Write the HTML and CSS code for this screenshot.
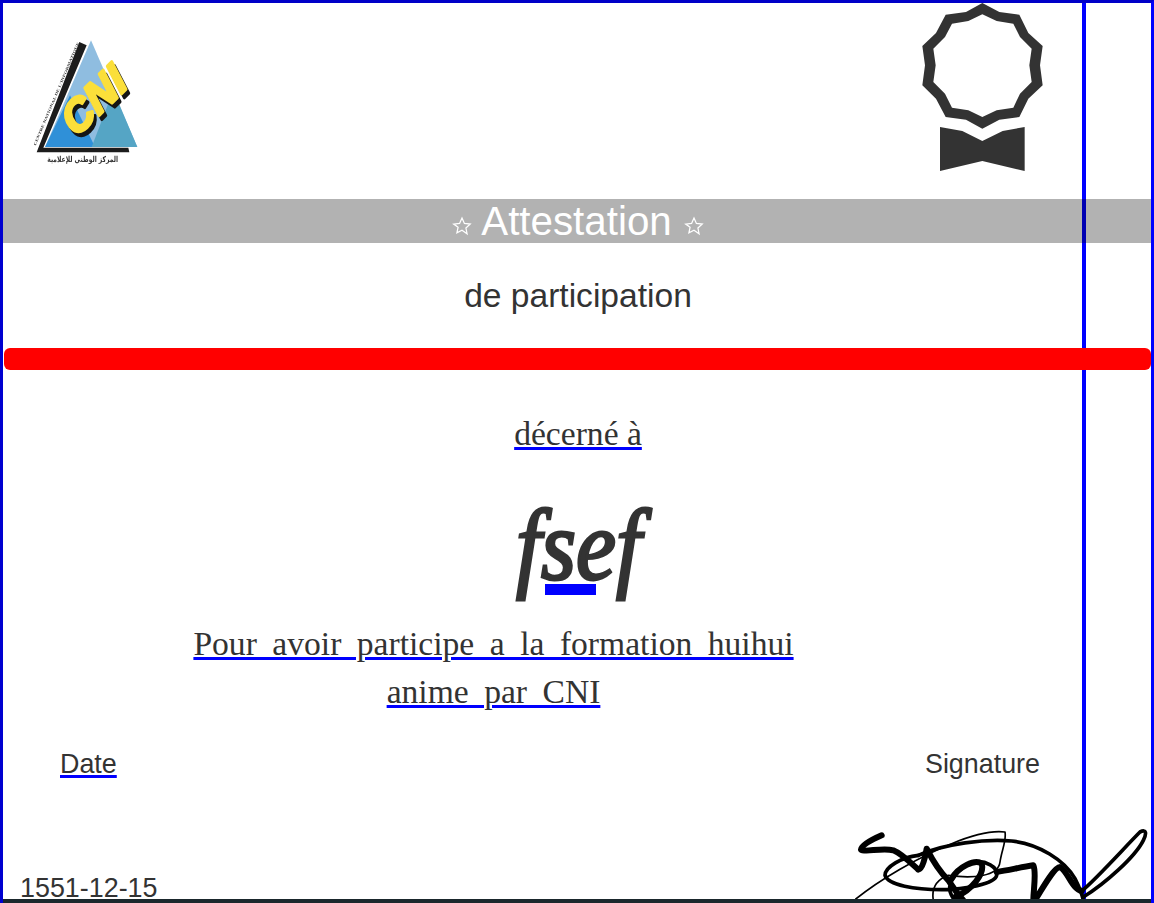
FILE: index.html
```html
<!DOCTYPE html>
<html lang="fr">
<head>
<meta charset="utf-8">
<title>Attestation</title>
<link rel="stylesheet" href="styles.css">
</head>
<body>
<main class="page">
  <div class="rule"></div>
  <header class="top">
    <svg class="logo" viewBox="90 110 330 390" width="110" height="130" role="img" aria-label="CNI">
      <polygon class="lg-black" points="238,125 260,135 130,442 385,442 388,456 110,456"/>
      <polygon class="lg-a" points="273,120 412,440 135,440"/>
      <polygon class="lg-b" points="135,440 210,285 285,440"/>
      <polygon class="lg-c" points="275,440 340,270 412,440"/>
      <text class="lg-small" transform="translate(107,436) rotate(-67)" textLength="335" lengthAdjust="spacingAndGlyphs">CENTRE NATIONAL DE L'INFORMATIQUE</text>
      <text class="lg-shadow" transform="translate(236,424) rotate(-44) skewX(-6)">CNI</text>
      <text class="lg-cni" transform="translate(228,412) rotate(-44) skewX(-6)">CNI</text>
      <text class="lg-ar" transform="translate(248,486) scale(1,1.35)" dir="rtl">المركز الوطني للإعلامية</text>
    </svg>
    <svg class="medal" viewBox="120 8 375 510" width="125" height="170" aria-hidden="true">
      <path fill-rule="evenodd" d="M307,8 258,35 197,43 168,98 127,137 135,195 127,255 168,295 197,350 258,358 307,385 358,358 418,350 445,295 488,255 480,195 488,137 445,98 418,43 358,35Z M307,42 265,62 216,70 195,110 160,145 167,195 160,245 195,280 216,322 265,330 307,350 350,330 400,322 420,280 455,245 448,195 455,145 420,110 400,70 350,62Z"/>
      <path d="M180,380 247,392 307,422 368,392 434,380 434,512 307,482 180,512Z"/>
    </svg>
  </header>

  <h1 class="band">
    <svg class="star" viewBox="0 0 24 24" aria-hidden="true"><path d="M12 2.500l2.900 6.400 7 .8-5.200 4.700 1.400 6.900L12 17l-6.100 3.300 1.400-6.900L2.100 9.700l7-.8z"/></svg>
    <span>Attestation</span>
    <svg class="star star-end" viewBox="0 0 24 24" aria-hidden="true"><path d="M12 2.500l2.900 6.400 7 .8-5.200 4.700 1.400 6.900L12 17l-6.100 3.300 1.400-6.900L2.100 9.700l7-.8z"/></svg>
  </h1>

  <h2 class="sub">de participation</h2>
  <div class="redbar"></div>
  <p class="awarded"><u>décerné à</u></p>
  <p class="name"><span class="name-text">fsef</span></p>
  <p class="reason"><u>Pour avoir participe a la formation huihui<br>anime par CNI</u></p>

  <footer class="bottom">
    <div class="col-date">
      <div class="date-label"><u>Date</u></div>
      <div class="date-value">1551-12-15</div>
    </div>
    <div class="col-sign">
      <div class="sign-label">Signature</div>
      <svg class="sign" viewBox="50 80 888 216" width="296" height="72" aria-hidden="true">
        <path class="s-thick" d="M130,105 C100,118 70,135 68,148 C80,158 130,140 165,150 C190,160 220,190 240,208 C255,205 262,160 265,145 C275,165 300,210 330,240 C345,262 360,285 375,300"/>
        <path class="s-mid" d="M240,165 C190,170 140,200 140,225 C150,255 230,268 310,268 C380,268 470,250 475,225 C480,200 440,180 410,185 C370,195 340,230 335,255 C330,275 345,295 350,300"/>
        <path class="s-thick" d="M350,290 C400,270 440,220 430,190 C410,175 360,200 340,235"/>
        <path class="s-mid" d="M240,165 C320,130 440,115 520,122 C600,130 680,180 710,235 C720,255 730,275 735,300"/>
        <path class="s-thin" d="M50,298 C120,240 240,170 340,130 C400,105 460,90 500,95 C505,120 490,150 485,185 C480,230 400,235 330,225 C290,240 280,270 285,300"/>
        <path class="s-thick" d="M475,215 C510,210 550,200 585,195 C595,215 585,270 585,300 M590,300 C620,250 650,200 665,200 C690,215 700,265 730,272"/>
        <path class="s-mid" d="M730,272 C770,240 860,140 905,95 C925,85 925,100 915,120 C890,170 800,250 735,290"/>
      </svg>
    </div>
  </footer>
  <div class="base"></div>
</main>
</body>
</html>
```

FILE: styles.css
```css
* { box-sizing: border-box; }
html, body { margin: 0; padding: 0; background: #fff; }
body { font-family: "Liberation Sans", Arial, sans-serif; color: #333; }
u { text-decoration: underline #00f 3px; text-underline-offset: 2px; }

.page {
  position: relative;
  width: 1154px;
  height: 903px;
  overflow: hidden;
  display: flex;
  flex-direction: column;
  border: 3px solid #00f;
  border-top-color: #0000c8;
  border-left-color: #0000d0;
  border-bottom: 0;
}
.rule {
  position: absolute;
  left: 1079px;
  top: 0;
  width: 4px;
  height: 100%;
  background: #00f;
}
.top {
  position: relative;
  flex: none;
  height: 196px;
  display: flex;
  justify-content: space-between;
  align-items: flex-start;
}
.logo { display: block; margin: 34px 0 0 27px; filter: blur(.35px); }
.medal { display: block; margin-right: 106px; fill: #333; }
.lg-black { fill: #1c1c1c; }
.lg-a { fill: #8fbde0; }
.lg-b { fill: #2f90d8; }
.lg-c { fill: #55a5c5; }
.lg-small { font: bold 11px "Liberation Serif", serif; fill: #333; }
.lg-shadow { font: italic bold 130px "Liberation Sans", sans-serif; fill: #151515; stroke: #151515; stroke-width: 9px; stroke-linejoin: round; }
.lg-cni { font: italic bold 130px "Liberation Sans", sans-serif; fill: #fbdf3a; stroke: #fbdf3a; stroke-width: 9px; stroke-linejoin: round; }
.lg-ar { font: bold 18px "DejaVu Sans", sans-serif; fill: #333; text-anchor: middle; }

.band {
  position: relative;
  flex: none;
  margin: 0;
  height: 44px;
  padding-left: 2px;
  display: flex;
  justify-content: center;
  align-items: center;
  gap: 9px;
  background: rgba(0, 0, 0, .3);
  color: #fff;
  font-size: 40.32px;
  font-weight: 400;
  line-height: 44px;
}
.star {
  width: 20px;
  height: 20px;
  margin-top: 9px;
  fill: none;
  stroke: #fff;
  stroke-width: 1.5;
}
.star-end { margin-left: 3px; }
.sub {
  flex: none;
  margin: 34px 0 0;
  padding-left: 2px;
  text-align: center;
  font-size: 33.6px;
  font-weight: 400;
  line-height: 38px;
}
.redbar {
  position: relative;
  flex: none;
  height: 22px;
  margin: 33px 0 0 1px;
  background: #f00;
  border-radius: 6px;
}
.awarded {
  flex: none;
  margin: 42px 0 0;
  padding-left: 2px;
  text-align: center;
  font: 33.6px/44px "Liberation Serif", serif;
}
.name {
  position: relative;
  flex: none;
  margin: 36px 0 0;
  height: 128px;
  padding-left: 2px;
  text-align: center;
  font: italic 400 100px/108px "Liberation Serif", serif;
}
.name-text {
  display: inline-block;
  transform: scaleX(.9);
  -webkit-text-stroke: 3px #333;
}
.name::after {
  content: "";
  position: absolute;
  left: 542px;
  top: 92px;
  width: 51px;
  height: 11px;
  background: #00f;
}
.reason {
  flex: none;
  margin: 0;
  padding-right: 167px;
  text-align: center;
  font: 33.6px/48px "Liberation Serif", serif;
  word-spacing: 7.1px;
}
.bottom {
  flex: none;
  margin-top: 32px;
  display: flex;
  justify-content: space-between;
  font-size: 26.88px;
  line-height: 32px;
}
.date-label { margin-left: 57px; }
.date-value { margin: 92px 0 0 17px; }
.col-sign {
  position: relative;
  display: flex;
  flex-direction: column;
  align-items: flex-end;
}
.sign-label { margin-right: 111px; }
.sign { display: block; margin-top: 47px; fill: none; stroke: #000; stroke-linecap: round; stroke-linejoin: round; }
.s-thick { stroke-width: 18; }
.s-mid { stroke-width: 11; }
.s-thin { stroke-width: 5; }
.base {
  position: absolute;
  left: -3px;
  right: -3px;
  bottom: 0;
  height: 4px;
  background: #1a272c;
}
```
